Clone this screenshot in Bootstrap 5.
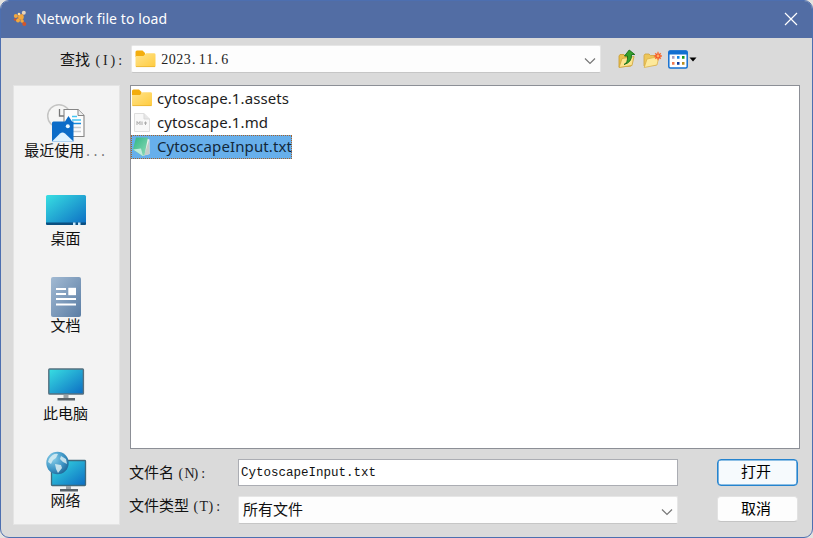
<!DOCTYPE html>
<html lang="zh-CN">
<head>
<meta charset="utf-8">
<meta name="viewport" content="width=device-width, initial-scale=1">
<title>Network file to load</title>
<link href="https://cdn.jsdelivr.net/npm/bootstrap@5.3.0/dist/css/bootstrap.min.css" rel="stylesheet">
<style>
html,body{height:100%;overflow:hidden}
body{background:#e4e2df;font-family:"Liberation Mono","Noto Sans CJK SC",monospace;font-size:15px;line-height:20px;color:#111}
.dialog{width:813px;height:538px;background:#dadada;border:1px solid #4d6fb0;border-radius:9px;overflow:hidden}
.titlebar{height:37px;background:#526da4;color:#fff;font-family:"Noto Sans",sans-serif;font-size:14px;padding:0 14px 2px 12px}
.titlebar .caption{margin-left:8px;letter-spacing:.1px}
.look-row{height:47px;padding:7px 0 12px 59px}
.look-label{width:71px;padding-top:4px}
.lat{font-size:12.5px;white-space:pre}
.cells{display:inline-flex;font-family:"Liberation Serif",serif;font-size:14px;color:#222;vertical-align:baseline}
.cells>span{width:7.5px;text-align:center;flex:none}
.cells>.pt{text-align:left;padding-left:1px}
.combo{background:#fdfdfd;border:1px solid #e6e6e6;border-bottom-color:#c6c6c6;border-radius:2px}
.look-combo{width:470px;height:28px;padding:0 4px 0 3px}
.places{width:107px;height:440px;background:#f3f3f3;border:1px solid #e4e4e4;padding-right:2px}
.place{height:87.6px;padding-top:15px;line-height:18px}
.place svg{display:block;width:42px;height:42px;flex:none}
.place .name{padding-top:1px}
.files{width:670px;height:364px;background:#fff;border:1px solid #8c8f96;padding:1px 0}
.file{height:24px;width:max-content;font-family:"Noto Sans",sans-serif;font-size:15px;letter-spacing:.1px;color:#1d1d1d}
.file .fname{margin-top:-2px}
.file svg{width:23px;height:22px;flex:none;margin-right:3px}
.file.chosen{background:#67afeb;outline:1px dotted #a5622b;outline-offset:-1px;color:#12283a}
.form-label-col{width:109px;margin-left:-1px}
.name-input{width:440px;height:27px;border:1px solid #abadb3;background:#fff;border-radius:0;padding:0 3px 0 2px;font-size:12.5px;color:#111}
.type-combo{width:440px;height:28px;padding:0 4px}
.dlg-btn{width:81px;height:27px;border-radius:4px;padding:2px 3px 0 0;font-size:15px;line-height:24px;color:#000;background:#fdfdfd;border:1px solid #d0d0d0;margin-left:39px}
.dlg-btn.primary{background:#f6fafd;border-color:#2583ce;box-shadow:inset 0 0 0 .6px #2583ce}
.dlg-btn.plain{height:26px;line-height:21px;border-color:#e2e2e2;border-bottom-color:#c4c4c4}
</style>
<script src="https://cdn.jsdelivr.net/npm/bootstrap@5.3.0/dist/js/bootstrap.bundle.min.js"></script>
</head>
<body>
<svg width="0" height="0" class="position-absolute">
<defs>
<linearGradient id="fold" x1="0" y1="0" x2="1" y2="1"><stop offset="0" stop-color="#ffe48d"/><stop offset="1" stop-color="#ffcb3e"/></linearGradient>
<linearGradient id="scr" x1="0" y1="0" x2="1" y2="1"><stop offset="0" stop-color="#38dfe2"/><stop offset="1" stop-color="#0c6cc3"/></linearGradient>
<linearGradient id="doc" x1="0" y1="0" x2="1" y2="1"><stop offset="0" stop-color="#a2bad3"/><stop offset="1" stop-color="#5b7da4"/></linearGradient>
<linearGradient id="note" x1="0" y1="0" x2="1" y2="1"><stop offset="0" stop-color="#2fb583"/><stop offset="1" stop-color="#8fdcba"/></linearGradient>
<radialGradient id="globe" cx=".3" cy=".3" r=".8"><stop offset="0" stop-color="#8bd0ea"/><stop offset=".6" stop-color="#3f96c6"/><stop offset="1" stop-color="#1f6596"/></radialGradient>
<symbol id="folder" viewBox="0 0 20 18"><path d="M0 2Q0 .5 1.5 .5H7L9.5 3V7H0Z" fill="#f3ad0d"/><path d="M0 6H8L10.5 3.2H18.5Q20 3.2 20 4.5V16Q20 17 19 17H1Q0 17 0 16Z" fill="url(#fold)"/><path d="M.5 16.6H19.5" stroke="#e9b22e" stroke-width=".8"/></symbol>
<symbol id="chev" viewBox="0 0 12 8"><path d="M1 1.5L6 6.5L11 1.5" fill="none" stroke="#777" stroke-width="1.2"/></symbol>
</defs>
</svg>
<div class="dialog">
  <div class="titlebar d-flex align-items-center">
    <svg width="15" height="17" viewBox="0 0 15 17"><path d="M3 6L8 7L11 2M8 7L11 14M4 10L8 7" stroke="#c77732" stroke-width="2" fill="none"/><g fill="#f2a83e"><circle cx="2.8" cy="6" r="2"/><circle cx="8" cy="7" r="2.8"/><circle cx="5" cy="10.5" r="2"/><circle cx="9" cy="11" r="1.7"/></g><circle cx="10.8" cy="2.8" r="2" fill="#e7d5bd"/><circle cx="6" cy="4" r="1.3" fill="#ffe0a0"/><circle cx="11.3" cy="14" r="2" fill="#d2552c"/><circle cx="2" cy="9.5" r="1.2" fill="#d2552c"/></svg>
    <span class="caption">Network file to load</span>
    <svg class="ms-auto" width="14" height="14" viewBox="0 0 14 14"><path d="M1 1L13 13M13 1L1 13" stroke="#fff" stroke-width="1.2"/></svg>
  </div>
  <div class="look-row d-flex align-items-center">
    <div class="look-label">查找<span class="cells ms-1"><span>(</span><span>I</span><span>)</span><span>:</span></span></div>
    <div class="combo look-combo d-flex align-items-center">
      <svg width="21" height="18"><use href="#folder"/></svg>
      <span class="cells" style="margin:2px 0 0 5px"><span>2</span><span>0</span><span>2</span><span>3</span><span class="pt">.</span><span>1</span><span>1</span><span class="pt">.</span><span>6</span></span>
      <svg class="ms-auto" style="margin-top:3px" width="12" height="8"><use href="#chev"/></svg>
    </div>
    <div class="d-flex align-items-center" style="margin-left:17px">
      <svg width="18" height="20" viewBox="0 0 18 20"><path d="M1 18V7L2 5.5H6L7 7H13V17Z" fill="#e9c04e" stroke="#c99a2c" stroke-width=".8"/><path d="M1 18.5L4 9.5L16 7.5L14 16.5Z" fill="#fbe38d" stroke="#cda23a" stroke-width=".8"/><path d="M6 15.5Q10 14 9.5 7H6.5L11.2 1L16.8 5.5H13.5Q14 13.5 6 15.5Z" fill="#35a22c" stroke="#176d18" stroke-width=".9"/></svg>
      <svg style="margin:2px 0 0 7px" width="19" height="18" viewBox="0 0 19 18"><path d="M1 15V4.5L2 3H6L7.5 4.5H13V14Z" fill="#edc65a" stroke="#cfa23c" stroke-width=".8"/><path d="M1.2 16.5L4 8L16 5.5L14 14Z" fill="#fde99b" stroke="#dbb14c" stroke-width=".8"/><path d="M15 .8V9.2M10.8 5H19M12.2 2.2L17.8 7.8M17.8 2.2L12.2 7.8" stroke="#f8743a" stroke-width="1.3"/><circle cx="15" cy="5" r="2.6" fill="#f4562a"/><circle cx="15" cy="5" r="1.4" fill="#ffb060"/></svg>
      <svg style="margin-left:6px" width="20" height="19" viewBox="0 0 20 19"><rect x=".8" y="1" width="18.4" height="17" rx="1.5" fill="#fff" stroke="#126fd1" stroke-width="1.5"/><path d="M.5 2Q.5.5 2 .5H18Q19.5.5 19.5 2V4.5H.5Z" fill="#126fd1"/><path d="M4 6H6.5V8.8H4Z" fill="#a69dc0"/><path d="M9 6H11.5V8.8H9Z" fill="#1686e5"/><path d="M14 6H16.5V8.8H14Z" fill="#15961e"/><path d="M4 12H6.5V14.8H4Z" fill="#f07a50"/><path d="M9 12H11.5V14.8H9Z" fill="#123b99"/><path d="M14 12H16.5V14.8H14Z" fill="#b88d20"/></svg>
      <svg style="margin-left:1px" width="8" height="5" viewBox="0 0 8 5"><path d="M.5 .5H7.5L4 4.5Z" fill="#000"/></svg>
    </div>
  </div>
  <div class="d-flex" style="padding-left:12px">
    <div class="places d-flex flex-column">
      <div class="place d-flex flex-column align-items-center">
        <svg viewBox="0 0 42 42"><circle cx="14" cy="15" r="11.3" fill="#f6f6f5" stroke="#c5c5c4" stroke-width="1.5"/><path d="M14.5 8V15H19" stroke="#777" stroke-width="1.3" fill="none"/><path d="M19 8.5H33L39 14.5V35.5H19Z" fill="#fcfcfc" stroke="#858585" stroke-width="1.1"/><path d="M33 8.5V14.5H39" fill="#eee" stroke="#858585"/><path d="M27 15.5H32M27 19H36" stroke="#44c5f3" stroke-width="1.3"/><path d="M27 22.5H36" stroke="#168add" stroke-width="1.3"/><path d="M27 26.5H36M27 30.5H36" stroke="#c7ccd1" stroke-width="1.3"/><path d="M7 22Q7 20.5 8.5 20.5H20L23.5 15L27 20.5H28.5V40.5H7Z" fill="#0b6cc8"/><path d="M7 40.5L15 32.5Q17.5 30.5 20 32.5L28.5 40.5Z" fill="#ddf2ff"/><circle cx="22.8" cy="25.3" r="2" fill="#e8f8ff"/></svg>
        <div class="name">最近使用<span class="lat" style="color:#777">...</span></div>
      </div>
      <div class="place d-flex flex-column align-items-center">
        <svg viewBox="0 0 42 42"><rect x="1" y="6" width="40" height="30" rx="1.5" fill="url(#scr)"/><path d="M1 33.5H41V34.5Q41 36 39.5 36H2.5Q1 36 1 34.5Z" fill="#0b4f80"/><path d="M28 33.5H30.5V36H28ZM33 33.5H35.5V36H33Z" fill="#c8eaff"/></svg>
        <div class="name">桌面</div>
      </div>
      <div class="place d-flex flex-column align-items-center">
        <svg viewBox="0 0 42 42"><rect x="6" y="1" width="30" height="40" rx="2" fill="url(#doc)"/><path d="M11 13H21M11 18H21M11 23H31M11 28.5H31" stroke="#fff" stroke-width="2.2"/><rect x="23.3" y="11.8" width="7.7" height="7.4" fill="#fff"/></svg>
        <div class="name">文档</div>
      </div>
      <div class="place d-flex flex-column align-items-center">
        <svg viewBox="0 0 42 42"><rect x="3.8" y="5" width="34.6" height="25" rx=".8" fill="url(#scr)" stroke="#56707f" stroke-width="1.4"/><path d="M18.5 30.7H23.5V34H18.5Z" fill="#9ba2a7"/><path d="M12.5 34H30V36.5H12.5Z" fill="#596269"/></svg>
        <div class="name">此电脑</div>
      </div>
      <div class="place d-flex flex-column align-items-center">
        <svg viewBox="0 0 42 42"><rect x="6.5" y="9.5" width="34" height="25" rx=".8" fill="url(#scr)" stroke="#3f697c" stroke-width="1.3"/><path d="M21 35H26V38.5H21Z" fill="#9ba2a7"/><path d="M15 38H33V40.5H15Z" fill="#596269"/><circle cx="12.5" cy="12" r="11.2" fill="url(#globe)"/><path d="M4 8Q8 2 13 3L11 7L8 9L6 13L3 11ZM16 5L21 8L22 13L18 11L15 8ZM10 13L16 14L17 17L13 22L11 18Z" fill="#d9edf2" opacity=".85"/></svg>
        <div class="name">网络</div>
      </div>
    </div>
    <div style="margin-left:10px">
      <div class="files">
        <div class="file d-flex align-items-center"><svg viewBox="0 0 23 22"><use href="#folder" x="1" y="1" width="20" height="18"/></svg><span class="fname">cytoscape.1.assets</span></div>
        <div class="file d-flex align-items-center"><svg viewBox="0 0 23 22"><path d="M3.5 1.5H13L18.5 7V19.5H3.5Z" fill="#f8f8f8" stroke="#dedede"/><path d="M13 1.5V7H18.5" fill="#e6e6e6" stroke="#d9d9d9"/><path d="M6 13V9.5L7.5 11.5L9 9.5V13M11 9.5V13M13 11H16M14.5 9.5V13" stroke="#aaa" fill="none"/></svg><span class="fname">cytoscape.1.md</span></div>
        <div class="file chosen d-flex align-items-center"><svg viewBox="0 0 23 22"><path d="M13 2L18.5 3.5V18L11 20Z" fill="#eef3ed"/><path d="M18 4L18.5 18L13 19.5Z" fill="#c5ccc8"/><path d="M5 1.5H17L13.5 19L11 20L2 13.5Z" fill="url(#note)"/><path d="M2 13.5L10 12.5L12 20Z" fill="#bfeadb"/></svg><span class="fname">CytoscapeInput.txt</span></div>
      </div>
      <div class="d-flex align-items-start" style="margin-top:10px">
        <div class="form-label-col" style="padding-top:5px">文件名<span class="cells" style="margin-left:3px"><span>(</span><span>N</span><span>)</span><span>:</span></span></div>
        <input class="form-control name-input" value="CytoscapeInput.txt" aria-label="文件名">
        <button class="btn dlg-btn primary">打开</button>
      </div>
      <div class="d-flex align-items-start" style="margin-top:10px">
        <div class="form-label-col" style="padding-top:1px">文件类型<span class="cells" style="margin-left:3px"><span>(</span><span>T</span><span>)</span><span>:</span></span></div>
        <div class="combo type-combo d-flex align-items-center"><span class="pt-1">所有文件</span><svg class="ms-auto" style="margin-top:3px" width="12" height="8"><use href="#chev"/></svg></div>
        <button class="btn dlg-btn plain">取消</button>
      </div>
    </div>
  </div>
</div>
</body>
</html>
